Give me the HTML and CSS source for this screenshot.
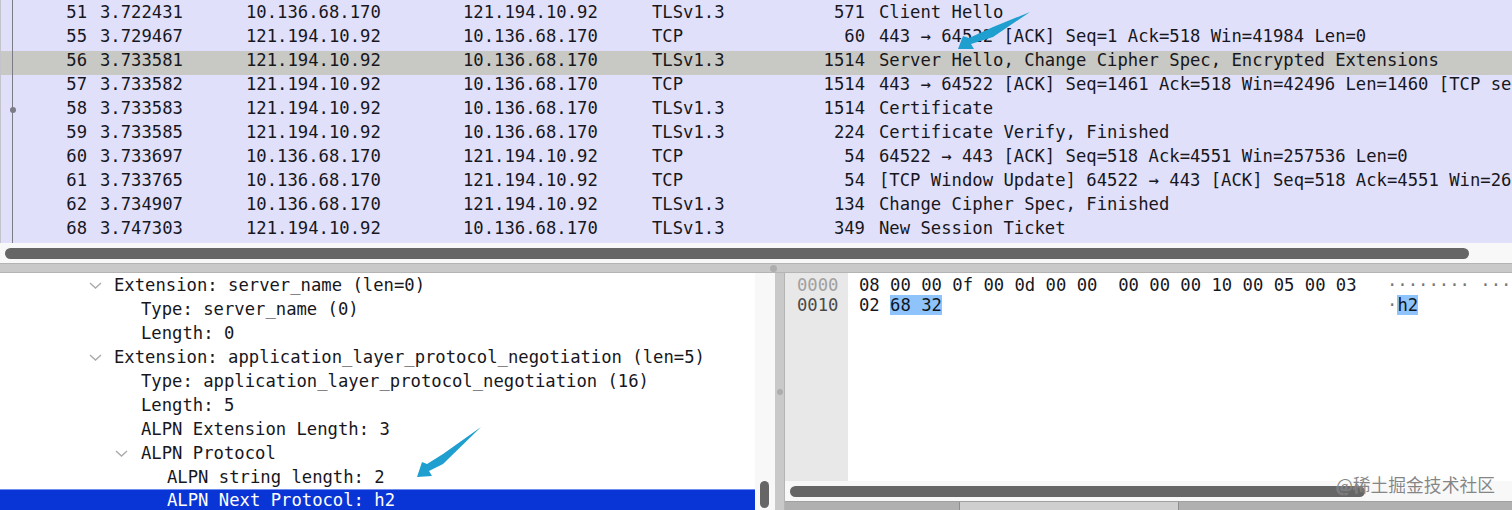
FILE: index.html
```html
<!DOCTYPE html>
<html lang="en">
<head>
<meta charset="utf-8">
<title>Wireshark TLS capture</title>
<link rel="stylesheet" href="styles.css">
</head>
<body>
<section class="packets">
  <div class="packet-list">
    <div class="conv-line"></div>
    <div class="conv-dot"></div>
    <div class="row"><span class="no">51</span><span class="time">3.722431</span><span class="src">10.136.68.170</span><span class="dst">121.194.10.92</span><span class="proto">TLSv1.3</span><span class="len">571</span><span class="info">Client Hello</span></div>
    <div class="row"><span class="no">55</span><span class="time">3.729467</span><span class="src">121.194.10.92</span><span class="dst">10.136.68.170</span><span class="proto">TCP</span><span class="len">60</span><span class="info">443 → 64522 [ACK] Seq=1 Ack=518 Win=41984 Len=0</span></div>
    <div class="row current"><span class="no">56</span><span class="time">3.733581</span><span class="src">121.194.10.92</span><span class="dst">10.136.68.170</span><span class="proto">TLSv1.3</span><span class="len">1514</span><span class="info">Server Hello, Change Cipher Spec, Encrypted Extensions</span></div>
    <div class="row"><span class="no">57</span><span class="time">3.733582</span><span class="src">121.194.10.92</span><span class="dst">10.136.68.170</span><span class="proto">TCP</span><span class="len">1514</span><span class="info">443 → 64522 [ACK] Seq=1461 Ack=518 Win=42496 Len=1460 [TCP segment of a reassembled PDU]</span></div>
    <div class="row"><span class="no">58</span><span class="time">3.733583</span><span class="src">121.194.10.92</span><span class="dst">10.136.68.170</span><span class="proto">TLSv1.3</span><span class="len">1514</span><span class="info">Certificate</span></div>
    <div class="row"><span class="no">59</span><span class="time">3.733585</span><span class="src">121.194.10.92</span><span class="dst">10.136.68.170</span><span class="proto">TLSv1.3</span><span class="len">224</span><span class="info">Certificate Verify, Finished</span></div>
    <div class="row"><span class="no">60</span><span class="time">3.733697</span><span class="src">10.136.68.170</span><span class="dst">121.194.10.92</span><span class="proto">TCP</span><span class="len">54</span><span class="info">64522 → 443 [ACK] Seq=518 Ack=4551 Win=257536 Len=0</span></div>
    <div class="row"><span class="no">61</span><span class="time">3.733765</span><span class="src">10.136.68.170</span><span class="dst">121.194.10.92</span><span class="proto">TCP</span><span class="len">54</span><span class="info">[TCP Window Update] 64522 → 443 [ACK] Seq=518 Ack=4551 Win=262144 Len=0</span></div>
    <div class="row"><span class="no">62</span><span class="time">3.734907</span><span class="src">10.136.68.170</span><span class="dst">121.194.10.92</span><span class="proto">TLSv1.3</span><span class="len">134</span><span class="info">Change Cipher Spec, Finished</span></div>
    <div class="row"><span class="no">68</span><span class="time">3.747303</span><span class="src">121.194.10.92</span><span class="dst">10.136.68.170</span><span class="proto">TLSv1.3</span><span class="len">349</span><span class="info">New Session Ticket</span></div>
  </div>
  <div class="hscroll-top"><div class="thumb-top"></div></div>
</section>
<div class="splitter"><i class="grip"></i></div>
<section class="lower">
  <div class="tree">
    <div class="node l1"><svg class="chev" viewBox="0 0 13 7"><polyline points="1,1 6.5,6 12,1"/></svg>Extension: server_name (len=0)</div>
    <div class="node l2">Type: server_name (0)</div>
    <div class="node l2">Length: 0</div>
    <div class="node l1"><svg class="chev" viewBox="0 0 13 7"><polyline points="1,1 6.5,6 12,1"/></svg>Extension: application_layer_protocol_negotiation (len=5)</div>
    <div class="node l2">Type: application_layer_protocol_negotiation (16)</div>
    <div class="node l2">Length: 5</div>
    <div class="node l2">ALPN Extension Length: 3</div>
    <div class="node l2b"><svg class="chev" viewBox="0 0 13 7"><polyline points="1,1 6.5,6 12,1"/></svg>ALPN Protocol</div>
    <div class="node l3">ALPN string length: 2</div>
    <div class="node l3 selected">ALPN Next Protocol: h2</div>
  </div>
  <div class="vscroll"><div class="thumb-v"></div></div>
  <div class="vsplit"><i class="grip"></i></div>
  <div class="bytes">
    <div class="dump">
      <div class="offsets"><div class="off-dim">0000</div><div>0010</div></div>
      <div class="hex"><div>08 00 00 0f 00 0d 00 00  00 00 00 10 00 05 00 03</div><div>02 <mark class="hl">68 32</mark></div></div>
      <div class="ascii"><div class="dots">········ ········</div><div><span class="dots">·</span><mark class="hl">h2</mark></div></div>
    </div>
    <div class="hscroll-bytes"><div class="thumb-bytes"></div></div>
    <div class="tabs"><div class="tab-a"></div><div class="tab-b"></div><div class="tab-c"></div></div>
  </div>
</section>
<svg class="arrows" viewBox="0 0 1512 510" aria-hidden="true">
  <path d="M1030 12 L993 27 L969 38 L963 36 L958 49 L974 49 L971 44 L993 37 Z"/>
  <path d="M481 427 L443 454 L427 464 L422 462 L417 477 L432 476 L429 471 L443 464 Z"/>
</svg>
<div class="watermark">@稀土掘金技术社区</div>
</body>
</html>
```
FILE: styles.css
```css
* { box-sizing: border-box; }
html, body { margin: 0; padding: 0; }
body {
  position: relative;
  width: 1512px;
  height: 510px;
  overflow: hidden;
  background: #fff;
  color: #17171d;
  font-family: "DejaVu Sans Mono", "Liberation Mono", monospace;
  font-size: 17.23px;
  line-height: 20px;
  display: flex;
  flex-direction: column;
}
.packets { height: 263px; flex: none; display: flex; flex-direction: column; }
.packet-list {
  position: relative;
  height: 243px;
  padding-top: 3px;
  background: #e1e0fb;
  border-left: 1px solid #c4c4cc;
  overflow: hidden;
}
.conv-line { position: absolute; left: 11px; top: 0; bottom: 0; width: 1px; background: #7c7c88; }
.conv-dot { position: absolute; left: 9px; top: 107px; width: 6px; height: 6px; border-radius: 50%; background: #7c7c88; }
.row { display: flex; height: 24px; line-height: 18px; white-space: pre; margin-left: -1px; }
.row.current { background: #c8c8c4; }
.no { width: 87px; text-align: right; flex: none; }
.time { width: 146px; margin-left: 13px; flex: none; }
.src { width: 217px; flex: none; }
.dst { width: 189px; flex: none; }
.proto { width: 120px; flex: none; }
.len { width: 93px; text-align: right; flex: none; }
.info { margin-left: 14px; flex: none; }
.hscroll-top { flex: 1; background: #f8f8f8; padding: 5px 43px 4px 5px; }
.thumb-top { height: 11px; border-radius: 6px; background: #666; }
.splitter { height: 10px; flex: none; background: #c9c9c9; border-top: 1px solid #b4b4b4; border-bottom: 1px solid #b4b4b4; display: flex; align-items: center; justify-content: center; padding-left: 34px; }
.grip { display: block; width: 7px; height: 7px; border-radius: 50%; background: #adadad; }
.lower { flex: 1; display: flex; min-height: 0; }
.tree { width: 755px; flex: none; overflow: hidden; }
.node { height: 24px; padding-top: 2px; white-space: pre; }
.l1 { padding-left: 89px; }
.l2 { padding-left: 141px; }
.l2b { padding-left: 115px; }
.l2b .chev { margin-right: 13px; }
.l3 { padding-left: 167px; }
.chev { display: inline-block; width: 13px; height: 7px; margin-right: 12px; vertical-align: 2px; }
.chev polyline { fill: none; stroke: #aaa; stroke-width: 1.4; }
.selected { background: #0a35d6; color: #fff; border-top: 1px solid #6f8cf0; padding-top: 0; }
.vscroll { width: 20px; flex: none; background: #f8f8f8; padding: 208px 6px 0 5px; }
.thumb-v { height: 27px; border-radius: 5px; background: #666; }
.vsplit { width: 10px; flex: none; background: #c9c9c9; border-right: 1px solid #b4b4b4; display: flex; justify-content: center; align-items: center; }
.vsplit .grip { width: 6px; height: 6px; }
.bytes { flex: 1; min-width: 0; display: flex; flex-direction: column; }
.dump { height: 208px; flex: none; display: flex; }
.offsets { width: 63px; flex: none; background: #e8e8e8; padding: 2px 0 0 12px; color: #4a4a4a; }
.off-dim { color: #a0a0a0; }
.hex { width: 539px; flex: none; padding: 2px 0 0 11px; white-space: pre; }
.ascii { flex: 1; min-width: 0; padding-top: 2px; white-space: pre; overflow: hidden; }
.dots { color: #777; }
.hl { background: #8fc3fb; color: #10161f; }
.hscroll-bytes { height: 20px; flex: none; background: #f8f8f8; padding: 5px 147px 4px 5px; }
.thumb-bytes { height: 11px; border-radius: 6px; background: #666; }
.tabs { flex: 1; display: flex; border-top: 1px solid #a0a0a0; }
.tab-a { width: 175px; background: #b0b0b0; border-right: 1px solid #8f8f8f; }
.tab-b { width: 219px; background: #cfcfcf; border-right: 1px solid #8f8f8f; }
.tab-c { flex: 1; background: #b0b0b0; }
.arrows { position: absolute; left: 0; top: 0; width: 1512px; height: 510px; pointer-events: none; }
.arrows path { fill: #1e9fd0; }
.watermark {
  position: absolute;
  right: 17px;
  top: 474px;
  font-family: "Noto Sans CJK SC", sans-serif;
  font-size: 17.8px;
  line-height: 20px;
  color: rgba(100, 100, 100, 0.78);
  text-shadow: 0 0 1px rgba(255, 255, 255, 0.6);
}
```
